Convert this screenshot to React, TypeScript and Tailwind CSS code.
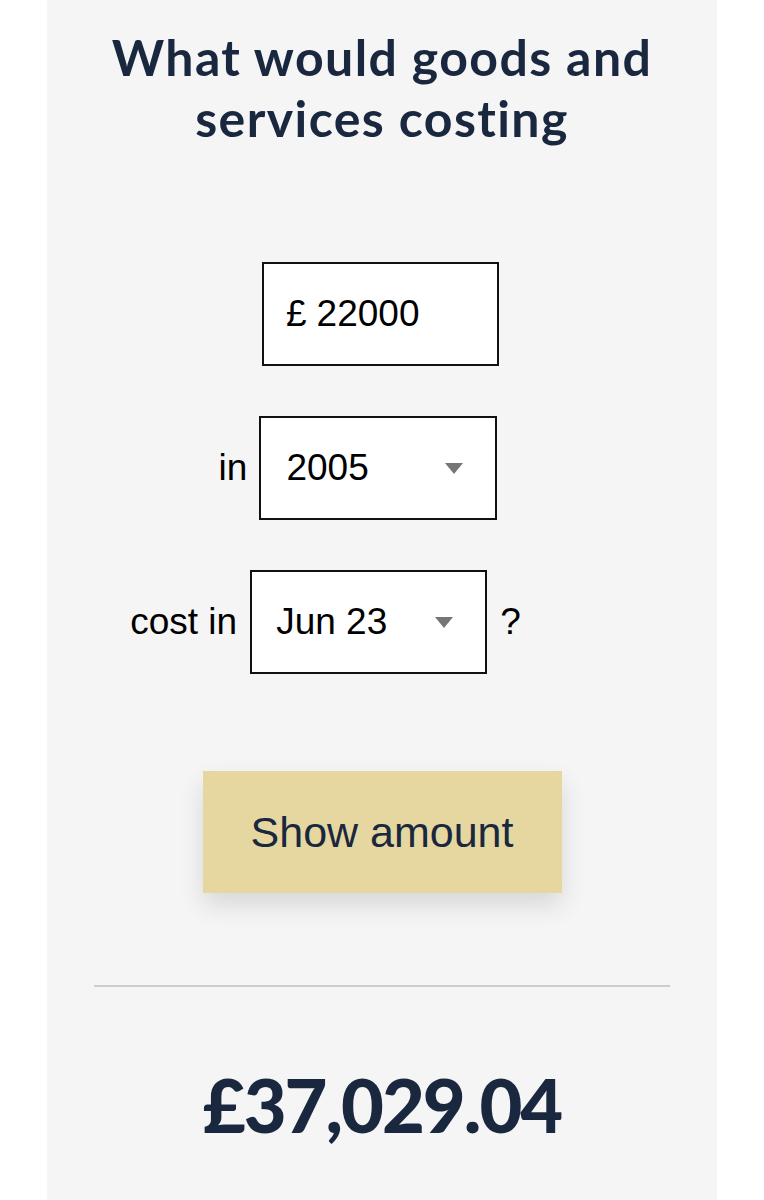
import { useState } from 'react'

const years = ['2000', '2001', '2002', '2003', '2004', '2005', '2006', '2007', '2008', '2009', '2010']
const months = ['Jan 23', 'Feb 23', 'Mar 23', 'Apr 23', 'May 23', 'Jun 23']

function Arrow() {
  return (
    <svg width="18" height="11" viewBox="0 0 18 11" className="shrink-0">
      <path d="M0 0 L18 0 L9 11 Z" fill="#767676" />
    </svg>
  )
}

function SelectBox({ value, options, onChange, className }: { value: string; options: string[]; onChange: (v: string) => void; className: string }) {
  return (
    <div className={`relative h-[104px] border-2 border-[#111] bg-white flex items-center ${className}`}>
      <select
        value={value}
        onChange={(e) => onChange(e.target.value)}
        className="absolute inset-0 opacity-0 cursor-pointer"
      >
        {options.map((o) => (
          <option key={o}>{o}</option>
        ))}
      </select>
      <span className="flex-1 text-[37px] text-black">{value}</span>
      <Arrow />
    </div>
  )
}

export default function App() {
  const [amount, setAmount] = useState('22000')
  const [year, setYear] = useState('2005')
  const [month, setMonth] = useState('Jun 23')

  return (
    <div className="min-h-screen bg-white font-['Liberation_Sans',Arial,sans-serif]">
      <div className="mx-[47px] min-h-[1200px] bg-[#f5f5f5] pt-[27px]">
        {/* Heading */}
        <h1 className="text-center text-[50px] leading-[61px] font-bold text-[#19273f] font-['Lato','Noto_Sans',sans-serif] tracking-[1.4px]">
          What would goods and
          <br />
          services costing
        </h1>

        {/* Form */}
        <div className="mt-[113px] space-y-[50px]">
          <div className="flex justify-center pr-[3px]">
            <label className="w-[237px] h-[104px] border-2 border-[#111] bg-white flex items-center pl-[22px] text-[37px] text-black">
              <span>£</span>
              <input
                value={amount}
                onChange={(e) => setAmount(e.target.value)}
                className="ml-[10px] w-full bg-transparent outline-none"
              />
            </label>
          </div>

          <div className="flex justify-center items-center gap-[12px] pr-[48px]">
            <span className="text-[37px] text-black">in</span>
            <SelectBox value={year} options={years} onChange={setYear} className="w-[238px] pl-[25px] pr-[32px]" />
          </div>

          <div className="flex justify-center items-center pr-[113px]">
            <span className="text-[37px] text-black mr-[13px]">cost in</span>
            <SelectBox value={month} options={months} onChange={setMonth} className="w-[237px] pl-[24px] pr-[32px]" />
            <span className="text-[37px] text-black ml-[13px]">?</span>
          </div>
        </div>

        {/* Button */}
        <div className="mt-[97px] flex justify-center">
          <button className="w-[359px] h-[122px] bg-[#e5d79f] text-[#19273f] text-[43px] shadow-[0_12px_24px_rgba(0,0,0,0.12)]">
            Show amount
          </button>
        </div>

        <div className="mx-[47px] mt-[92px] h-[2px] bg-[#cccccc]" />

        {/* Result */}
        <p className="mt-[81px] text-center text-[74px] leading-none font-black text-[#19273f] font-['Lato','Noto_Sans',sans-serif] tracking-[-2px]">
          £37,029.04
        </p>
      </div>
    </div>
  )
}
